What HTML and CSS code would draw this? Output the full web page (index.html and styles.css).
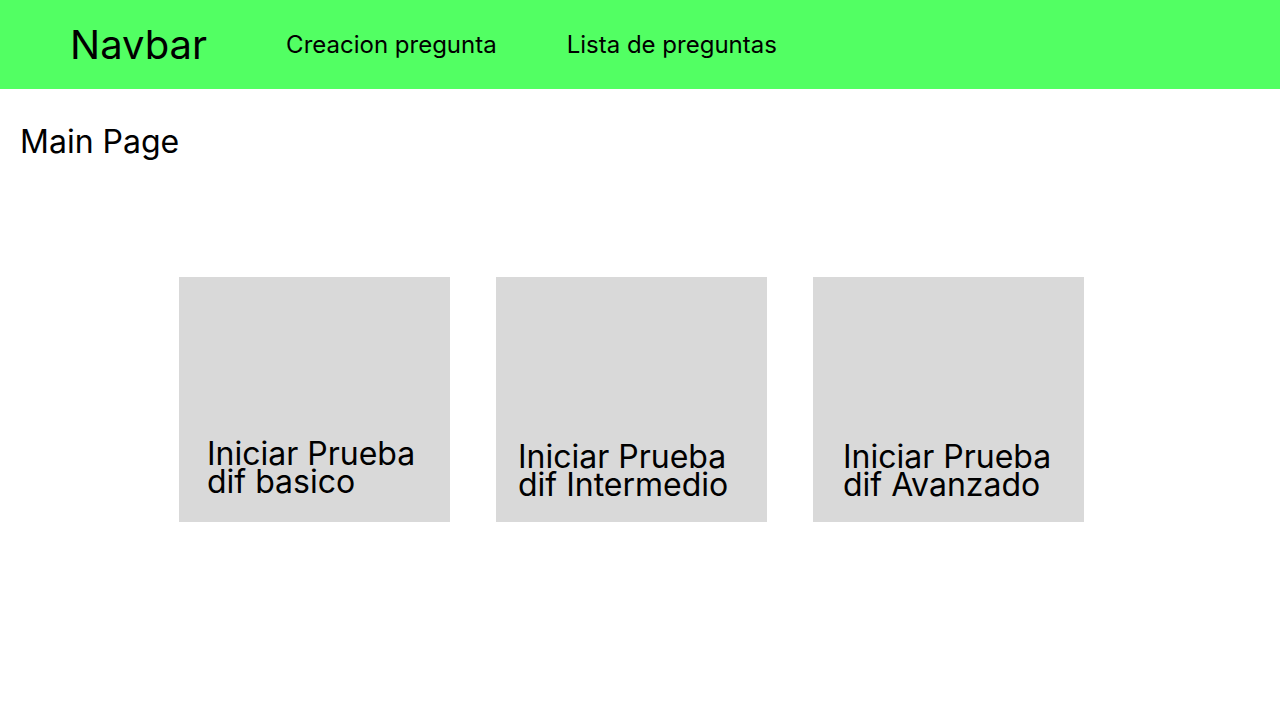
FILE: index.html
```html
<!DOCTYPE html>
<html lang="es">
<head>
<meta charset="utf-8">
<title>Main Page</title>
<link rel="stylesheet" href="styles.css">
</head>
<body>
<header class="navbar">
  <div class="brand">Navbar</div>
  <nav class="nav-links">
    <a class="nav-link" href="#">Creacion pregunta</a>
    <a class="nav-link" href="#">Lista de preguntas</a>
  </nav>
</header>
<main class="main">
  <h1 class="page-title">Main Page</h1>
  <section class="cards">
    <div class="card card-basic"><span class="card-text">Iniciar Prueba<br>dif basico</span></div>
    <div class="card card-mid"><span class="card-text">Iniciar Prueba<br>dif Intermedio</span></div>
    <div class="card card-adv"><span class="card-text">Iniciar Prueba<br>dif Avanzado</span></div>
  </section>
</main>
</body>
</html>
```
FILE: styles.css
```css
* { box-sizing: border-box; }
html, body { margin: 0; padding: 0; }
body {
  font-family: Inter, "Noto Sans", sans-serif;
  color: #000;
  background: #fff;
  width: 1280px;
  height: 720px;
  overflow: hidden;
}
.navbar {
  height: 89px;
  background: #52ff63;
  display: flex;
  align-items: center;
  padding-left: 70px;
}
.brand {
  font-size: 40px;
  font-weight: 400;
  margin-right: 79px;
}
.nav-links {
  display: flex;
  gap: 70px;
}
.nav-link {
  font-size: 24px;
  color: #000;
  text-decoration: none;
}
.main {
  padding: 33px 0 0 20px;
}
.page-title {
  margin: 0;
  font-size: 32px;
  font-weight: 400;
  line-height: normal;
}
.cards {
  display: flex;
  gap: 46px;
  margin-top: 116px;
  padding-left: 159px;
}
.card {
  width: 271px;
  height: 245px;
  background: #d9d9d9;
  display: flex;
  flex-direction: column;
  justify-content: flex-end;
}
.card-text {
  font-size: 32px;
  line-height: 28px;
}
.card-basic { padding: 0 0 26px 28px; }
.card-mid { padding: 0 0 23px 22px; }
.card-adv { padding: 0 0 23px 30px; }
```
